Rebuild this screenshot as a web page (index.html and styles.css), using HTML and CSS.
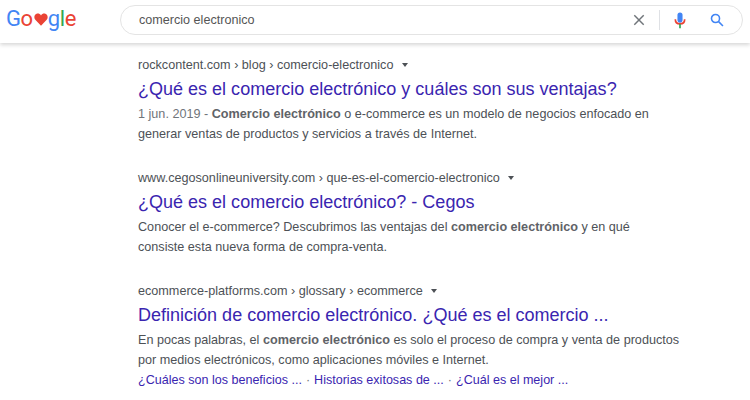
FILE: index.html
```html
<!DOCTYPE html>
<html lang="es">
<head>
  <meta charset="UTF-8">
  <title>comercio electronico - Buscar con Google</title>
  <link rel="stylesheet" href="styles.css">
</head>
<body>
  <div class="header">
    <div class="logo">
      <span class="blue">G</span><span class="red">o</span>
      <svg class="heart" viewBox="0 0 24 22"><path d="M12 21.500 2.600 12C-.6 8.700.2 3.600 3.700 1.700 6.700.1 10 1 12 4c2-3 5.300-3.900 8.300-2.300 3.500 1.900 4.300 7 1.100 10.300z"/></svg>
      <span class="blue">g</span><span class="green">l</span><span class="red">e</span>
    </div>
    <div class="search">
      <div class="query">comercio electronico</div>
      <svg class="icon-x" viewBox="0 0 14 14"><path d="M1.500 1.500l11 11M12.500 1.500l-11 11"/></svg>
      <div class="divider"></div>
      <svg class="icon-mic" viewBox="0 0 14 20">
        <rect class="mic-blue" x="4" y="0.500" width="6" height="12" rx="3"/>
        <path class="mic-red" d="M1.500 8.500c0 3.500 2.500 5.500 5.500 5.500s5.500-2 5.500-5.500"/>
        <path class="mic-green" d="M7 14v5"/>
      </svg>
      <svg class="icon-search" viewBox="0 0 16 16"><circle cx="6.300" cy="6.300" r="4.600"/><path d="M9.800 9.800l5 5"/></svg>
    </div>
  </div>

  <div class="results">
    <div class="result">
      <div class="url">rockcontent.com › blog › comercio-electronico <span class="arrow"></span></div>
      <a class="title" href="#">¿Qué es el comercio electrónico y cuáles son sus ventajas?</a>
      <div class="snippet"><span class="date">1 jun. 2019 - </span><b>Comercio electrónico</b> o e-commerce es un modelo de negocios enfocado en<br>generar ventas de productos y servicios a través de Internet.</div>
    </div>
    <div class="result">
      <div class="url">www.cegosonlineuniversity.com › que-es-el-comercio-electronico <span class="arrow"></span></div>
      <a class="title" href="#">¿Qué es el comercio electrónico? - Cegos</a>
      <div class="snippet">Conocer el e-commerce? Descubrimos las ventajas del <b>comercio electrónico</b> y en qué<br>consiste esta nueva forma de compra-venta.</div>
    </div>
    <div class="result">
      <div class="url">ecommerce-platforms.com › glossary › ecommerce <span class="arrow"></span></div>
      <a class="title" href="#">Definición de comercio electrónico. ¿Qué es el comercio ...</a>
      <div class="snippet">En pocas palabras, el <b>comercio electrónico</b> es solo el proceso de compra y venta de productos<br>por medios electrónicos, como aplicaciones móviles e Internet.</div>
      <div class="sitelinks">
        <a href="#">¿Cuáles son los beneficios ...</a><span class="dot">·</span><a href="#">Historias exitosas de ...</a><span class="dot">·</span><a href="#">¿Cuál es el mejor ...</a>
      </div>
    </div>
  </div>
</body>
</html>
```

FILE: styles.css
```css
body {
  margin: 0;
  background: #fff;
  font-family: "Liberation Sans", Arial, sans-serif;
  color: #4d5156;
  overflow: hidden;
}
a {
  text-decoration: none;
}
.header {
  display: flex;
  align-items: flex-start;
  height: 43px;
  box-shadow: 0 2px 4px rgba(0, 0, 0, 0.16);
}
.logo {
  display: flex;
  align-items: center;
  width: 120px;
  height: 36px;
  padding-left: 6px;
  box-sizing: border-box;
  font-family: Roboto, sans-serif;
  font-size: 22px;
  letter-spacing: -0.4px;
}
.blue { color: #4285f4; }
.red { color: #ea4335; }
.green { color: #34a853; }
.heart {
  width: 14px;
  height: 13px;
  fill: #ea4335;
  margin: 3px 0 0 1px;
}
.search {
  display: flex;
  align-items: center;
  width: 623px;
  height: 30px;
  margin-top: 5px;
  box-sizing: border-box;
  border: 1px solid #e4e4e4;
  border-radius: 15px;
  padding: 0 18px;
}
.query {
  flex: 1;
  font-size: 12.600px;
  color: #555;
}
.icon-x {
  width: 12px;
  height: 12px;
  margin-right: 1px;
  fill: none;
  stroke: #70757a;
  stroke-width: 1.700;
}
.divider {
  width: 1px;
  height: 20px;
  background: #dfe1e5;
  margin: 0 14px 0 13px;
}
.icon-mic {
  width: 12px;
  height: 17px;
  fill: none;
}
.mic-blue { fill: #4285f4; }
.mic-red { stroke: #ea4335; stroke-width: 2; }
.mic-green { stroke: #34a853; stroke-width: 2; }
.icon-search {
  width: 14px;
  height: 14px;
  margin-left: 24px;
  fill: none;
  stroke: #4285f4;
  stroke-width: 1.800;
}
.results {
  padding: 14px 0 0 138px;
}
.result {
  height: 113px;
}
.url {
  font-size: 12.630px;
  line-height: 16px;
  color: #4d5156;
  white-space: nowrap;
}
.arrow {
  display: inline-block;
  margin: 0 0 2px 5px;
  border-left: 3.500px solid transparent;
  border-right: 3.500px solid transparent;
  border-top: 4.500px solid #4d5156;
}
.title {
  display: block;
  margin-top: 4px;
  font-size: 18.030px;
  line-height: 24px;
  color: #3a25b0;
  white-space: nowrap;
}
.snippet {
  margin-top: 3px;
  font-size: 12.630px;
  line-height: 20px;
  white-space: nowrap;
}
.date {
  color: #70757a;
}
.snippet b {
  color: #5f6368;
}
.sitelinks {
  font-size: 12.550px;
  line-height: 20px;
  white-space: nowrap;
}
.sitelinks a {
  color: #3a25b0;
}
.dot {
  margin: 0 4px;
  color: #70757a;
}
```
